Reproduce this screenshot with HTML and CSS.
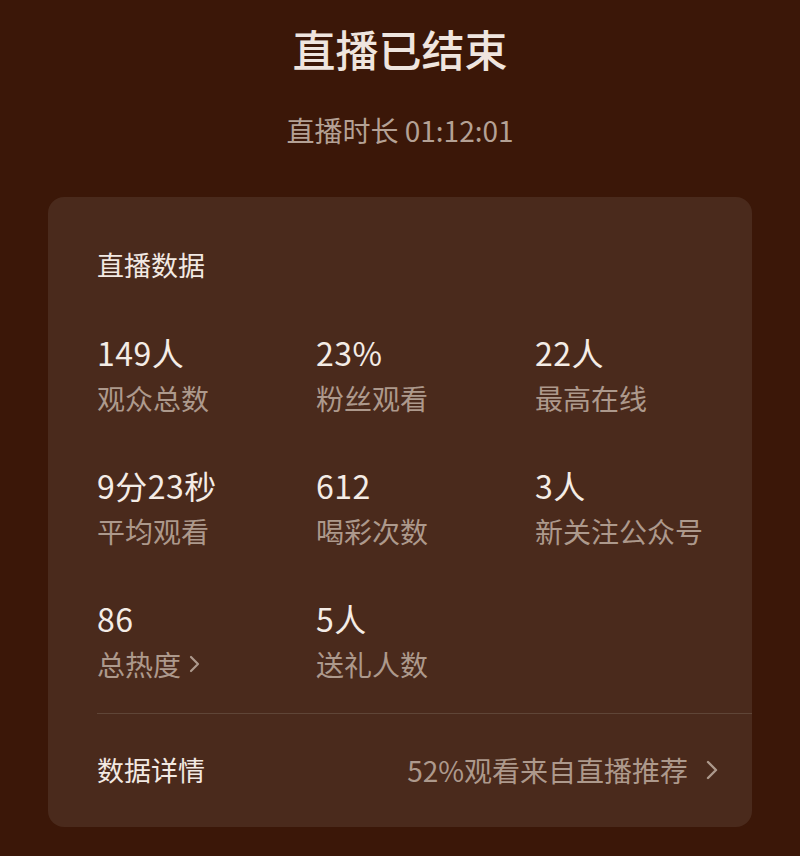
FILE: index.html
```html
<!DOCTYPE html>
<html lang="zh-CN">

<head>
  <meta charset="UTF-8">
  <meta name="viewport" content="width=device-width, initial-scale=1.0">
  <title>直播已结束</title>
  <link rel="stylesheet" href="styles.css">
</head>

<body>
  <!-- 顶部标题 -->
  <div class="header">
    <h1>直播已结束</h1>
    <div class="duration">直播时长 01:12:01</div>
  </div>

  <!-- 数据卡片 -->
  <div class="card">
    <h3>直播数据</h3>
    <div class="stats">
      <div class="stat">
        <div class="stat-value">149人</div>
        <div class="stat-label">观众总数</div>
      </div>
      <div class="stat">
        <div class="stat-value">23%</div>
        <div class="stat-label">粉丝观看</div>
      </div>
      <div class="stat">
        <div class="stat-value">22人</div>
        <div class="stat-label">最高在线</div>
      </div>
      <div class="stat">
        <div class="stat-value">9分23秒</div>
        <div class="stat-label">平均观看</div>
      </div>
      <div class="stat">
        <div class="stat-value">612</div>
        <div class="stat-label">喝彩次数</div>
      </div>
      <div class="stat">
        <div class="stat-value">3人</div>
        <div class="stat-label">新关注公众号</div>
      </div>
      <div class="stat">
        <div class="stat-value">86</div>
        <div class="stat-label">总热度
          <svg class="arrow-small" width="14" height="22" viewBox="0 0 14 22">
            <path d="M3 4 L10 11 L3 18" fill="none" stroke="currentColor" stroke-width="2.2" stroke-linecap="round" stroke-linejoin="round" />
          </svg>
        </div>
      </div>
      <div class="stat">
        <div class="stat-value">5人</div>
        <div class="stat-label">送礼人数</div>
      </div>
    </div>

    <!-- 数据详情 -->
    <div class="detail-row">
      <span class="detail-title">数据详情</span>
      <span class="detail-info">52%观看来自直播推荐
        <svg class="arrow" width="16" height="26" viewBox="0 0 16 26">
          <path d="M4 5 L12 13 L4 21" fill="none" stroke="currentColor" stroke-width="2.4" stroke-linecap="round" stroke-linejoin="round" />
        </svg>
      </span>
    </div>
  </div>
</body>

</html>
```

FILE: styles.css
```css
/* 全局样式 */
body {
  font-family: "Noto Sans CJK SC", "Noto Sans", sans-serif;
  margin: 0;
  padding: 0;
  background-color: #3b1708;
  color: #f2e9e3;
  height: 856px;
  overflow: hidden;
}

/* 顶部标题 */
.header {
  text-align: center;
  padding-top: 19px;
}

.header h1 {
  margin: 0;
  font-size: 43px;
  font-weight: 500;
  line-height: 58px;
  color: #efe5df;
}

.duration {
  margin-top: 37px;
  font-size: 28px;
  line-height: 32px;
  color: #b4a195;
}

/* 数据卡片 */
.card {
  margin: 51px 48px 0 48px;
  background-color: #4a2a1c;
  border-radius: 16px;
  padding: 48px 0 0 49px;
  height: 582px;
}

.card h3 {
  margin: 0;
  font-size: 27px;
  font-weight: 400;
  line-height: 40px;
  color: #f2e9e3;
}

.stats {
  display: grid;
  grid-template-columns: 219px 219px 1fr;
  row-gap: 47px;
  margin-top: 47px;
  padding-bottom: 29px;
  border-bottom: 1px solid #5f4537;
}

.stat-value {
  font-size: 32px;
  line-height: 40px;
  letter-spacing: 0.5px;
  color: #f4ece6;
}

.stat-label {
  margin-top: 6px;
  font-size: 28px;
  line-height: 40px;
  color: #ad998c;
  display: flex;
  align-items: center;
}

.arrow-small {
  margin-left: 7px;
}

/* 数据详情行 */
.detail-row {
  display: flex;
  justify-content: space-between;
  align-items: center;
  padding: 36px 32px 0 0;
}

.detail-title {
  font-size: 27px;
  line-height: 40px;
  color: #f2e9e3;
}

.detail-info {
  font-size: 28px;
  line-height: 40px;
  color: #ad998c;
  display: flex;
  align-items: center;
}

.detail-info .arrow {
  margin-left: 16px;
}
```
